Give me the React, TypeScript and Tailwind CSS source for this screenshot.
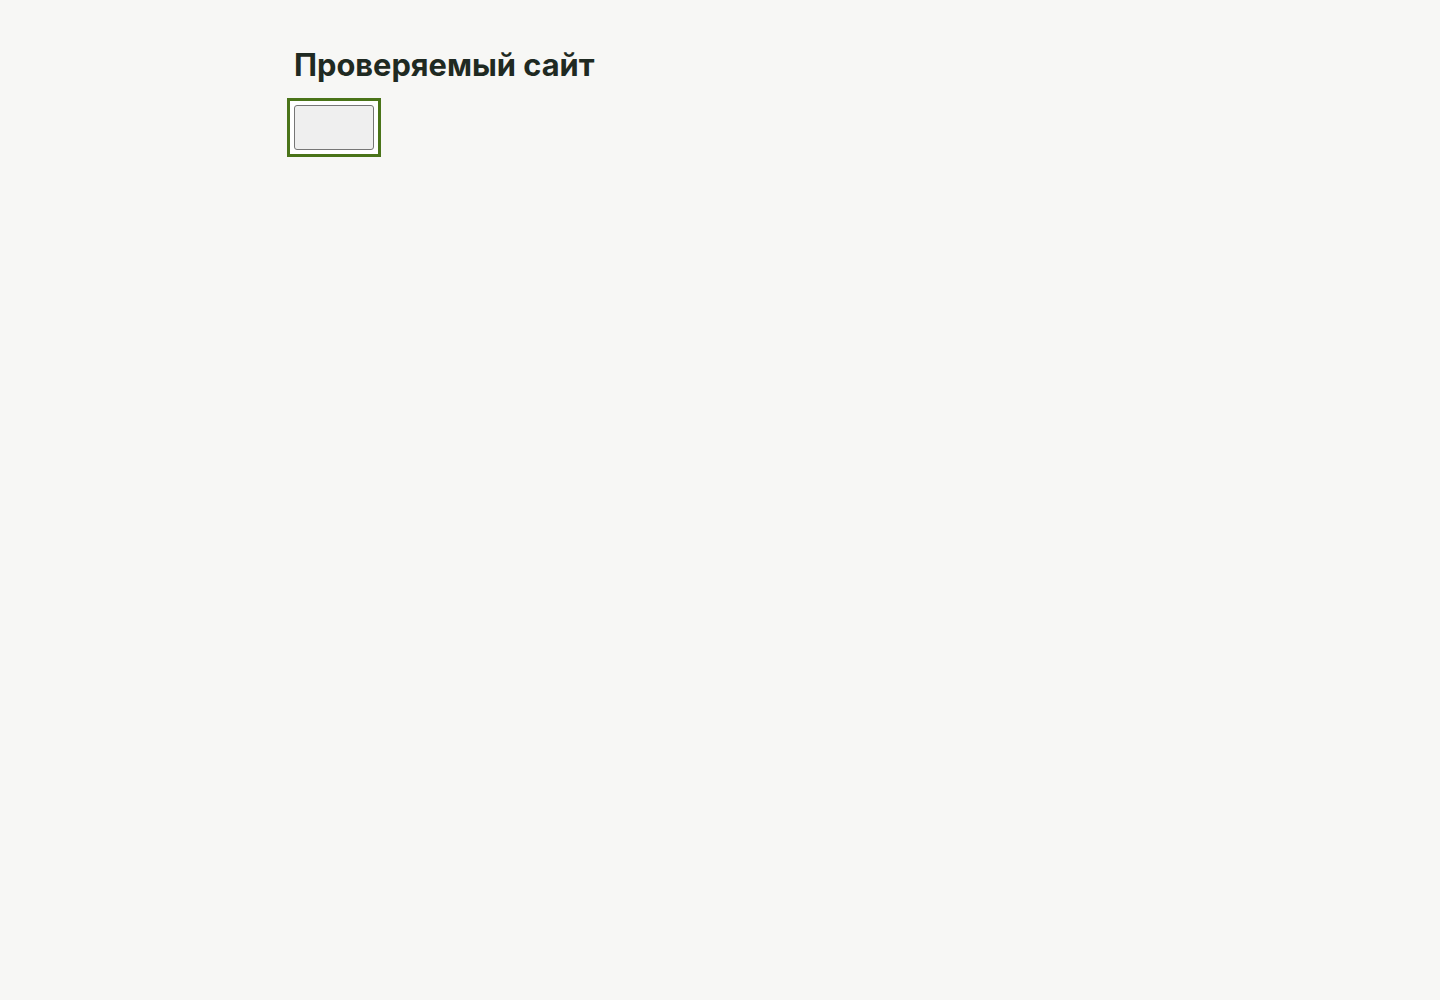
export default function App() {
  return (
    <div className="min-h-screen bg-[#f7f7f5] font-['Inter','Liberation_Sans',sans-serif] text-[#1f2a22]">
      <div className="mx-auto w-[866px] pt-[45px]">
        <h1 className="pl-[7px] text-[30.8px] font-bold leading-[40px]">Проверяемый сайт</h1>
        <div className="mt-[13px] inline-flex border-[3px] border-[#4a7419] bg-white p-1">
          <button
            type="button"
            className="h-[45px] w-[80px] rounded-[3px] border border-[#767676] bg-[#efefef]"
          />
        </div>
      </div>
    </div>
  )
}
